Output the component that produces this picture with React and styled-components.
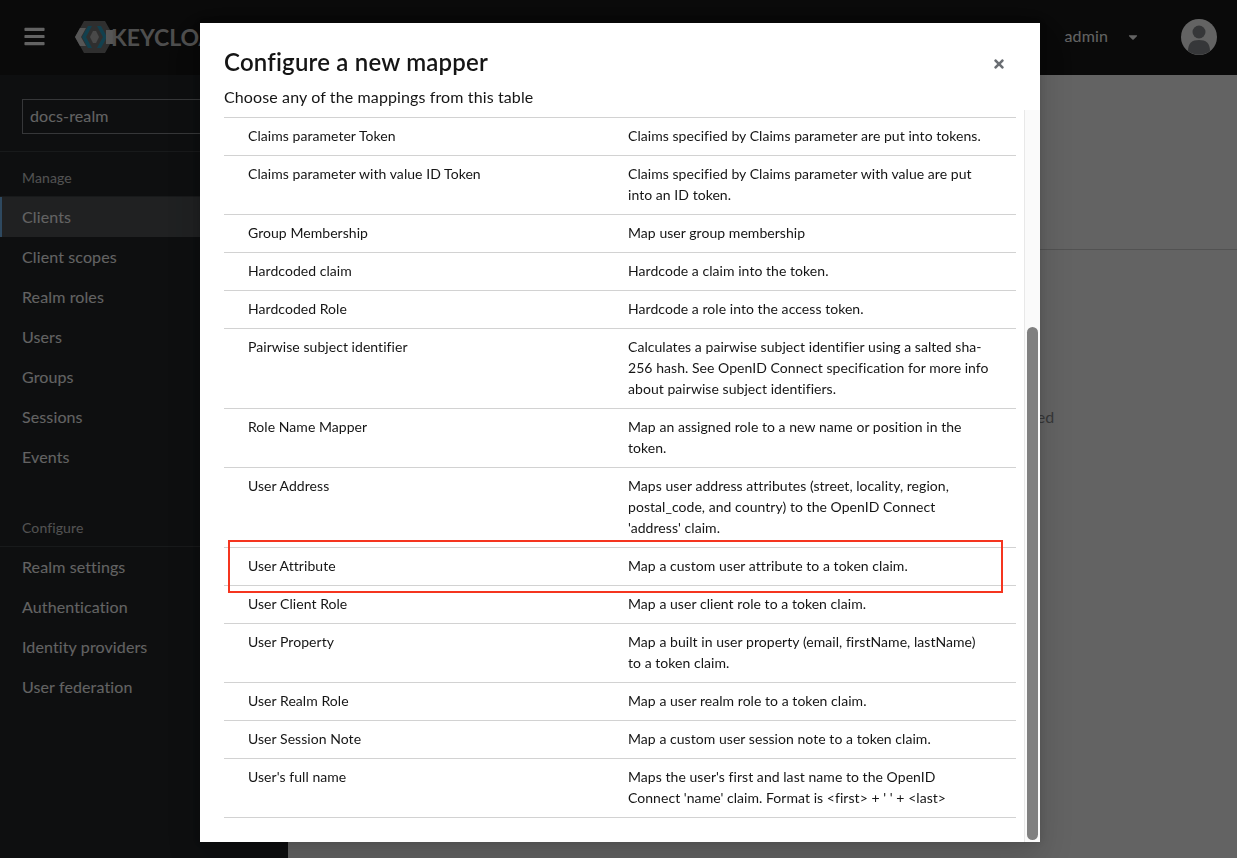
import { useEffect, useRef } from 'react';
import styled, { createGlobalStyle } from 'styled-components';
import { FaTimes, FaBars, FaCaretDown } from 'react-icons/fa';

const FONT = "Lato, 'Noto Sans', sans-serif";

const manageLinks = ['Clients', 'Client scopes', 'Realm roles', 'Users', 'Groups', 'Sessions', 'Events'];
const configureLinks = ['Realm settings', 'Authentication', 'Identity providers', 'User federation'];

const mappers = [
  ['Allowed Web Origins', 'Adds all allowed web origins to the token.'],
  ['Audience', 'Add specified audience to the audience (aud) field of token.'],
  ['Audience Resolve', 'Adds all client_ids of clients the user has a role in to the audience field of the token.'],
  ['Authentication Context Class Reference (ACR)', 'Maps the achieved LoA (Level of Authentication) to the acr claim of the token.'],
  ['Claims parameter Token', 'Claims specified by Claims parameter are put into tokens.'],
  ['Claims parameter with value ID Token', 'Claims specified by Claims parameter with value are put into an ID token.'],
  ['Group Membership', 'Map user group membership'],
  ['Hardcoded claim', 'Hardcode a claim into the token.'],
  ['Hardcoded Role', 'Hardcode a role into the access token.'],
  ['Pairwise subject identifier', 'Calculates a pairwise subject identifier using a salted sha-256 hash. See OpenID Connect specification for more info about pairwise subject identifiers.'],
  ['Role Name Mapper', 'Map an assigned role to a new name or position in the token.'],
  ['User Address', "Maps user address attributes (street, locality, region, postal_code, and country) to the OpenID Connect 'address' claim."],
  ['User Attribute', 'Map a custom user attribute to a token claim.'],
  ['User Client Role', 'Map a user client role to a token claim.'],
  ['User Property', 'Map a built in user property (email, firstName, lastName) to a token claim.'],
  ['User Realm Role', 'Map a user realm role to a token claim.'],
  ['User Session Note', 'Map a custom user session note to a token claim.'],
  ["User's full name", "Maps the user's first and last name to the OpenID Connect 'name' claim. Format is <first> + ' ' + <last>"],
];

export default function App() {
  const bodyRef = useRef(null);

  useEffect(() => {
    bodyRef.current.scrollTop = bodyRef.current.scrollHeight;
  }, []);

  return (
    <>
      <GlobalStyle />
      <Page>
        <Masthead>
          <MenuButton><FaBars size={23} /></MenuButton>
          <Logo>
            <svg width="40" height="32" viewBox="0 0 40 32">
              <polygon points="9,0 30,0 39,16 30,32 9,32 0,16" fill="#777" />
              <polygon points="0,16 5,7 11,7 6,16 11,25 5,25" fill="#ddd" />
              <polygon points="13,5 17,5 11,16 17,27 13,27 7,16" fill="#2aa3c9" />
              <polygon points="22,5 26,5 32,16 26,27 22,27 28,16" fill="#2aa3c9" />
              <polygon points="15,16 18,10 21,10 24,16 21,22 18,22" fill="#bbb" />
              <rect x="31" y="9" width="8" height="14" fill="#ddd" />
            </svg>
            <LogoText>KEYCLOAK</LogoText>
          </Logo>
          <UserMenu>
            <UserName>admin</UserName>
            <FaCaretDown size={14} />
          </UserMenu>
          <Avatar>
            <svg width="36" height="36" viewBox="0 0 36 36">
              <circle cx="18" cy="18" r="18" fill="#fff" />
              <circle cx="18" cy="13" r="6.5" fill="#8a8d90" />
              <path d="M7 32c0-8 4-11 11-11s11 3 11 11a18 18 0 0 1-22 0z" fill="#8a8d90" />
            </svg>
          </Avatar>
        </Masthead>
        <Body>
          <Sidebar>
            <RealmBox>
              <RealmSelect>docs-realm</RealmSelect>
            </RealmBox>
            <NavTitle>Manage</NavTitle>
            {manageLinks.map((link) => (
              <NavLink key={link} $active={link === 'Clients'}>{link}</NavLink>
            ))}
            <NavTitle $spaced>Configure</NavTitle>
            {configureLinks.map((link) => (
              <NavLink key={link}>{link}</NavLink>
            ))}
          </Sidebar>
          <Main>
            <MainHeader />
            <EmptyText>If you want to add mappers, please click the button below to add some predefined</EmptyText>
          </Main>
        </Body>
      </Page>
      <Backdrop>
        <Modal>
          <ModalHeader>
            <ModalTitle>Configure a new mapper</ModalTitle>
            <CloseButton><FaTimes size={14} /></CloseButton>
          </ModalHeader>
          <ModalHint>Choose any of the mappings from this table</ModalHint>
          <ModalContent>
            <ModalBody ref={bodyRef}>
              <TableHead>
                <span>Name</span>
                <span>Description</span>
              </TableHead>
              {mappers.map(([name, description]) => (
                <Row key={name}>
                  <span>{name}</span>
                  <span>{description}</span>
                  {name === 'User Attribute' && <Highlight />}
                </Row>
              ))}
            </ModalBody>
            <ScrollTrack>
              <ScrollThumb />
            </ScrollTrack>
          </ModalContent>
        </Modal>
      </Backdrop>
    </>
  );
}

const GlobalStyle = createGlobalStyle`
  html, body {
    height: 100%;
    margin: 0;
    overflow: hidden;
  }

  body {
    font-family: ${FONT};
    font-size: 16px;
    letter-spacing: 0.12px;
    background: #fff;
  }
`;

const Page = styled.div`
  height: 100vh;
  display: flex;
  flex-direction: column;
`;

const Masthead = styled.header`
  height: 75px;
  flex: none;
  display: flex;
  align-items: center;
  padding: 0 20px 2px 23px;
  box-sizing: border-box;
  background: #151515;
  color: #fff;
`;

const MenuButton = styled.div`
  display: flex;
  width: 52px;
`;

const Logo = styled.div`
  display: flex;
  align-items: center;
`;

const LogoText = styled.span`
  margin-left: -4px;
  font-size: 23px;
  font-weight: 700;
  letter-spacing: 0;
  color: #c9c9c9;
`;

const UserMenu = styled.div`
  margin-left: auto;
  display: flex;
  align-items: center;
  gap: 18px;
  margin-right: 41px;
`;

const UserName = styled.span`
  padding: 0 0 2px 1px;
  font-size: 16px;
`;

const Avatar = styled.div`
  display: flex;
  width: 36px;
  height: 36px;
`;

const Body = styled.div`
  flex: 1;
  display: flex;
  min-height: 0;
`;

const Sidebar = styled.nav`
  width: 288px;
  flex: none;
  background: #212427;
  color: #fff;
`;

const RealmBox = styled.div`
  padding: 24px 22px 17px;
  border-bottom: 1px solid #3c3f42;
`;

const RealmSelect = styled.div`
  height: 35px;
  box-sizing: border-box;
  padding: 0 7px;
  line-height: 31px;
  border: 1px solid #8a8d90;
`;

const NavTitle = styled.div`
  margin-top: ${({ $spaced }) => ($spaced ? '25px' : '0')};
  padding: 15px 22px 8px;
  font-size: 14px;
  line-height: 21px;
  color: #d2d2d2;
  border-bottom: 1px solid #3c3f42;
`;

const NavLink = styled.div`
  height: 40px;
  box-sizing: border-box;
  padding-left: 22px;
  line-height: 40px;
  background: ${({ $active }) => ($active ? '#4f5255' : 'transparent')};
  box-shadow: ${({ $active }) => ($active ? 'inset 2px 0 0 #73bcf7' : 'none')};
`;

const Main = styled.main`
  flex: 1;
  min-width: 0;
`;

const MainHeader = styled.div`
  height: 174px;
  border-bottom: 1px solid #d2d2d2;
`;

const EmptyText = styled.p`
  margin: 157px 0 0;
  color: #8a8d90;
  text-align: center;
  white-space: nowrap;
`;

const Backdrop = styled.div`
  position: fixed;
  inset: 0;
  display: flex;
  padding: 23px 197px 16px 200px;
  background: rgba(3, 3, 3, 0.62);
`;

const Modal = styled.div`
  flex: 1;
  min-width: 0;
  display: flex;
  flex-direction: column;
  background: #fff;
  color: #151515;
  box-shadow: 0 16px 32px rgba(3, 3, 3, 0.16), 0 0 8px rgba(3, 3, 3, 0.1);
`;

const ModalHeader = styled.div`
  display: flex;
  align-items: center;
  justify-content: space-between;
  padding: 23px 34px 0 24px;
`;

const ModalTitle = styled.h1`
  margin: 0;
  font-size: 24px;
  font-weight: 600;
  letter-spacing: 0.2px;
  line-height: 31px;
`;

const CloseButton = styled.div`
  display: flex;
  margin-top: 5px;
  color: #6a6e73;
`;

const ModalHint = styled.p`
  margin: 8px 0 1px;
  padding: 0 24px;
  line-height: 24px;
`;

const ModalContent = styled.div`
  flex: 1;
  min-height: 0;
  display: flex;
`;

const ModalBody = styled.div`
  flex: 1;
  min-width: 0;
  overflow-y: scroll;
  padding: 0 8px 24px 24px;
  font-size: 14px;
  letter-spacing: 0.05px;
  line-height: 21px;
`;

const ScrollTrack = styled.div`
  flex: none;
  width: 16px;
  box-sizing: border-box;
  padding: 217px 2px 2px 2px;
  display: flex;
  background: #fafafa;
  border-left: 1px solid #e8e8e8;
`;

const ScrollThumb = styled.div`
  flex: 1;
  background: #808080;
  border-radius: 6px;
`;

const Row = styled.div`
  position: relative;
  display: grid;
  grid-template-columns: 380px 1fr;
  padding: 7px 26px 9px 24px;
  border-bottom: 1px solid #d2d2d2;
`;

const TableHead = styled(Row)`
  font-weight: 700;
`;

const Highlight = styled.div`
  position: absolute;
  left: 4px;
  top: -8px;
  width: 775px;
  height: 53px;
  box-sizing: border-box;
  border: 2px solid #f5351f;
`;
